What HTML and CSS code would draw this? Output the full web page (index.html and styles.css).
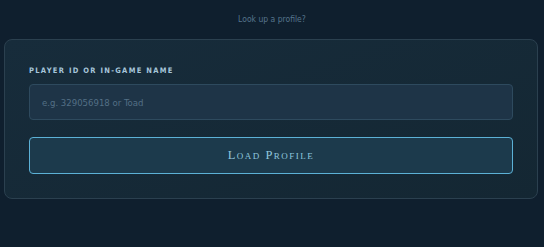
FILE: index.html
```html
<!DOCTYPE html>
<html lang="en">
<head>
  <meta charset="UTF-8">
  <meta name="viewport" content="width=device-width, initial-scale=1.0">
  <title>Look up a profile</title>
  <link rel="stylesheet" href="styles.css">
</head>
<body>
  <p class="hint">Look up a profile?</p>

  <div class="card">
    <label class="field-label" for="player">Player ID or in-game name</label>
    <input type="text" id="player" class="player-input" placeholder="e.g. 329056918 or Toad">
    <button class="load-button">Load Profile</button>
  </div>
</body>
</html>
```

FILE: styles.css
```css
body {
  margin: 0;
  padding: 14px 4px 0;
  height: 247px;
  box-sizing: border-box;
  background: #0f1f2e;
  font-family: "DejaVu Sans Condensed", "DejaVu Sans", sans-serif;
}

.hint {
  margin: 0 0 14px;
  text-align: center;
  font-size: 8.5px;
  color: #56748c;
  height: 11px;
  line-height: 11px;
}

.card {
  display: flex;
  flex-direction: column;
  width: 534px;
  height: 160px;
  box-sizing: border-box;
  padding: 26px 24px 0;
  border: 1px solid #2b404f;
  border-radius: 8px;
  background: linear-gradient(160deg, #172c3b 0%, #142733 100%);
}

.field-label {
  font-size: 7.5px;
  font-weight: bold;
  letter-spacing: 1.3px;
  text-transform: uppercase;
  color: #a7c6da;
  line-height: 10px;
  margin-bottom: 8px;
}

.player-input {
  height: 36px;
  box-sizing: border-box;
  padding: 0 12px;
  border: 1px solid #2e4a5e;
  border-radius: 4px;
  background: #1e3447;
  color: #c8dbe8;
  font-family: "DejaVu Sans Condensed", "DejaVu Sans", sans-serif;
  font-size: 9.5px;
  outline: none;
}

.player-input::placeholder {
  color: #536f85;
}

.load-button {
  margin-top: 17px;
  height: 37px;
  border: 1px solid #5cb1d6;
  border-radius: 4px;
  background: #1c3a4c;
  color: #90c6de;
  font-family: "Liberation Serif", serif;
  font-size: 12.5px;
  font-variant: small-caps;
  letter-spacing: 1.5px;
  cursor: pointer;
}
```
